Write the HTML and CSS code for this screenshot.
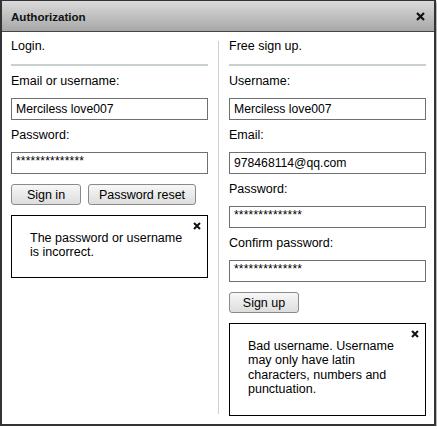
FILE: index.html
```html
<!DOCTYPE html>
<html>
<head>
<meta charset="utf-8">
<link rel="stylesheet" href="styles.css">
</head>
<body>
<div class="window">
  <div class="titlebar">
    <span class="title">Authorization</span>
    <svg class="close-main" width="9" height="9" viewBox="0 0 9 9"><path d="M1 1L8 8M8 1L1 8" stroke="#111" stroke-width="2.2"/></svg>
  </div>
  <div class="body">
    <div class="col">
      <div class="heading">Login.</div>
      <div class="rule"></div>
      <label class="label">Email or username:</label>
      <input class="input" type="text" value="Merciless love007">
      <label class="label">Password:</label>
      <input class="input stars" type="text" value="**************">
      <div class="buttons">
        <button class="btn w70">Sign in</button>
        <button class="btn w108">Password reset</button>
      </div>
      <div class="error">
        <svg class="close-box" width="8" height="8" viewBox="0 0 8 8"><path d="M1 1L7 7M7 1L1 7" stroke="#111" stroke-width="2"/></svg>
        The password or username<br>is incorrect.
      </div>
    </div>
    <div class="divider"></div>
    <div class="col">
      <div class="heading">Free sign up.</div>
      <div class="rule"></div>
      <label class="label">Username:</label>
      <input class="input" type="text" value="Merciless love007">
      <label class="label">Email:</label>
      <input class="input" type="text" value="978468114@qq.com">
      <label class="label">Password:</label>
      <input class="input stars" type="text" value="**************">
      <label class="label">Confirm password:</label>
      <input class="input stars" type="text" value="**************">
      <div class="buttons">
        <button class="btn w70">Sign up</button>
      </div>
      <div class="error tall">
        <svg class="close-box" width="8" height="8" viewBox="0 0 8 8"><path d="M1 1L7 7M7 1L1 7" stroke="#111" stroke-width="2"/></svg>
        Bad username. Username<br>may only have latin<br>characters, numbers and<br>punctuation.
      </div>
    </div>
  </div>
</div>
</body>
</html>
```

FILE: styles.css
```css
html, body {
  margin: 0;
  padding: 0;
  background: #ffffff;
}
body {
  font-family: "Liberation Sans", Arial, sans-serif;
  color: #000;
  font-size: 12.5px;
}
.window {
  box-sizing: border-box;
  width: 436px;
  height: 426px;
  border: 2px solid #333;
  border-top: 1px solid #333;
  background: #fff;
  box-shadow: 1px 2px 3px rgba(0, 0, 0, 0.45);
  display: flex;
  flex-direction: column;
}
.titlebar {
  height: 30px;
  border-bottom: 1px solid #444;
  background: linear-gradient(#dadada, #a7a7a7);
  display: flex;
  align-items: center;
  justify-content: space-between;
  padding: 0 9px 0 9px;
}
.title {
  font-weight: bold;
  font-size: 11.6px;
  color: #111;
}
.close-main {
  display: block;
}
.body {
  flex: 1;
  display: flex;
  padding: 0 8px 0 9px;
}
.col {
  width: 197px;
  display: flex;
  flex-direction: column;
  padding-top: 7px;
}
.divider {
  width: 1px;
  background: #cfcfcf;
  margin: 9px 10px 10px 10px;
}
.heading {
  height: 14px;
  line-height: 14px;
}
.rule {
  height: 2px;
  background: #c9d0d0;
  margin: 11px 0 8px;
}
.label {
  display: block;
  height: 14px;
  line-height: 14px;
  margin-bottom: 10px;
}
.input {
  box-sizing: border-box;
  width: 197px;
  height: 22px;
  margin: 0 0 8px;
  border: 1px solid #707070;
  padding: 0 4px;
  font-family: "Liberation Sans", Arial, sans-serif;
  font-size: 12.2px;
  color: #000;
  background: #fff;
  outline: none;
}
.stars {
  font-size: 12px;
  letter-spacing: 0.2px;
  padding-bottom: 4px;
}
.buttons {
  display: flex;
  gap: 7px;
  margin-top: 2px;
}
.btn {
  box-sizing: border-box;
  height: 21px;
  border: 1px solid #8a8a8a;
  border-radius: 3px;
  background: linear-gradient(#f7f7f7, #dddddd);
  font-family: "Liberation Sans", Arial, sans-serif;
  font-size: 12.5px;
  color: #000;
  padding: 0;
}
.w70 { width: 70px; }
.w108 { width: 108px; }
.error {
  position: relative;
  margin-top: 10px;
  border: 1px solid #000;
  padding: 15px 18px 17px 18px;
  line-height: 14.4px;
}
.tall {
  padding-bottom: 18px;
}
.close-box {
  position: absolute;
  top: 6px;
  right: 6px;
}
```
